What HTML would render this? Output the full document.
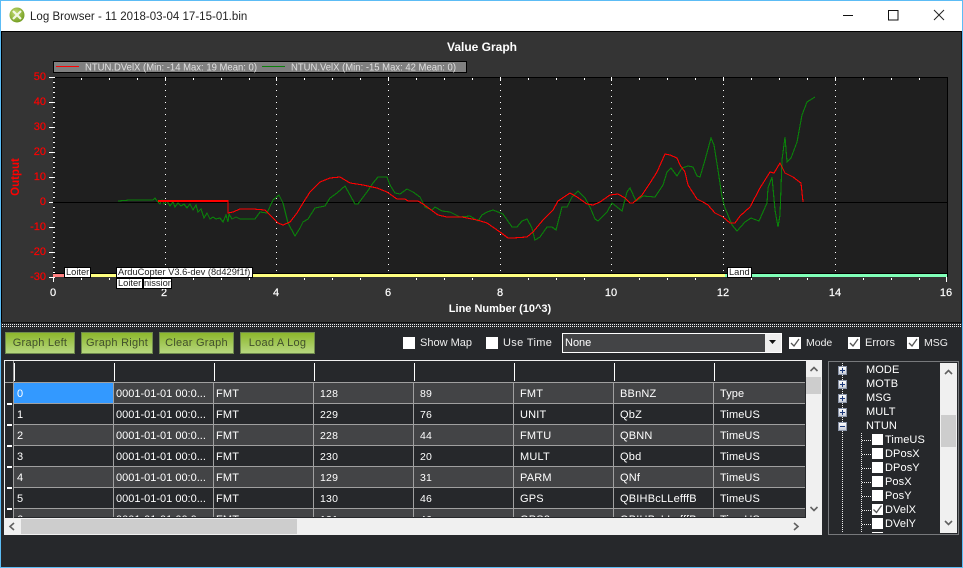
<!DOCTYPE html>
<html><head><meta charset="utf-8"><title>Log Browser</title>
<style>
html,body{margin:0;padding:0;width:963px;height:568px;overflow:hidden;background:#26282b}
*{box-sizing:border-box}
body{font-family:"Liberation Sans",sans-serif;position:relative}
.a{position:absolute}
.t{position:absolute;white-space:nowrap;color:#fff;font-size:11px;line-height:14px}
.btn{position:absolute;top:332px;height:22px;border:1px solid #6f8a4e;background:linear-gradient(#8db72c,#b6d77e);color:#41502c;font-size:11px;line-height:20px;text-align:center;letter-spacing:.25px;white-space:nowrap}
.cb{position:absolute;width:12px;height:12px;background:#fff}
.row{position:absolute;left:14px;width:791px;height:21px;border-bottom:1px solid #a0a0a0}
.row.o{background:#434446}
.row.e{background:#26282b}
.c{position:absolute;top:0;height:20px;border-right:1px solid #a0a0a0;color:#fff;font-size:11px;line-height:22px;padding-left:2px;white-space:nowrap;overflow:hidden;letter-spacing:.2px}
.c1{left:0;width:100px;padding-left:3px}.c2{left:100px;width:100px;letter-spacing:0}.c3{left:200px;width:100px}.c4{left:300px;width:100px;font-size:10.5px;padding-left:6px}.c5{left:400px;width:100px;font-size:10.5px;padding-left:6px}.c6{left:500px;width:100px;padding-left:6px}.c7{left:600px;width:100px;padding-left:6px}.c8{left:700px;width:91px;border:0;padding-left:6px;letter-spacing:.1px}
.hs{position:absolute;top:363px;width:1px;height:18px;background:#fff}
.dash{position:absolute;left:7px;width:5px;height:2px;background:#fff}
.tr{position:absolute;color:#fff;font-size:11px;line-height:16px;white-space:nowrap;letter-spacing:.1px}
.pm{position:absolute;left:838px;width:9px;height:9px;background:linear-gradient(#fff,#c8cdd8);border:1px solid #8a94a8}
.pm i{position:absolute;left:1px;top:3px;width:5px;height:1px;background:#1d3a7a}
.pm b{position:absolute;left:3px;top:1px;width:1px;height:5px;background:#1d3a7a}
.sub{position:absolute;left:872px;width:11px;height:11px;background:#fff}
.lb{position:absolute;background:#fff;border:1px solid #000;color:#222;font-size:9.3px;line-height:9px;white-space:nowrap;padding-left:1px;overflow:hidden}
</style></head>
<body>
<!-- window frame -->
<div class="a" style="left:0;top:0;width:963px;height:31px;background:#fff;border-top:1px solid #5cbcf5;border-left:1px solid #5cbcf5;border-right:1px solid #5cbcf5"></div>
<svg class="a" style="left:9px;top:7px" width="18" height="18" viewBox="0 0 18 18"><defs><radialGradient id="g" cx=".4" cy=".35" r=".7"><stop offset="0" stop-color="#c4dc72"/><stop offset="1" stop-color="#6f9a1e"/></radialGradient></defs><circle cx="8" cy="8" r="7.5" fill="url(#g)"/><path d="M4 4l8 8M12 4l-8 8" stroke="#f2f7e4" stroke-width="2.2"/></svg>
<div class="t" style="left:30px;top:9px;color:#222;font-size:11.5px;letter-spacing:.02px;line-height:16px">Log Browser - 11 2018-03-04 17-15-01.bin</div>
<svg class="a" style="left:830px;top:0" width="133" height="31"><path d="M13 15.5h10" stroke="#111" fill="none"/><rect x="58.500" y="10.500" width="9.500" height="9.500" fill="none" stroke="#111"/><path d="M104 10l10 10M114 10l-10 10" stroke="#222" fill="none"/></svg>

<!-- graph panel -->
<div class="a" style="left:1px;top:31px;width:961px;height:292px;background:#343434;border-top:1px solid #000;border-left:1px solid #000;border-right:1px solid #111"></div>
<div class="a" style="left:0;top:1px;width:1px;height:566px;background:#5cbcf5"></div>
<div class="a" style="left:962px;top:1px;width:1px;height:566px;background:#5cbcf5"></div>
<div class="a" style="left:0;top:567px;width:963px;height:1px;background:#5cbcf5"></div>
<div class="a" style="left:1px;top:322px;width:961px;height:1px;background:#111"></div>
<div class="a" style="left:2px;top:323px;width:959px;height:5px;background:#26282b"></div>
<svg class="a" style="left:2px;top:324px" width="959" height="3"><path d="M0 .5H959M0 2.500H959" stroke="#f0f0f0" stroke-dasharray="1 1" fill="none"/></svg>

<svg class="a" style="left:0;top:0;font-family:'Liberation Sans',sans-serif" width="963" height="325">
<text x="482" y="51" fill="#fff" font-size="12" font-weight="bold" text-anchor="middle">Value Graph</text>
<rect x="53" y="77" width="894" height="200" fill="#1f1f1f"/>
<path d="M53 77.500H947.500V277" fill="none" stroke="#000"/>
<!-- grid -->
<g stroke="#fff" fill="none">
<path d="M165.500 78V280M276.500 78V280M388.500 78V280M500.500 78V280M611.500 78V280M723.500 78V280M835.500 78V280" stroke-dasharray="1 5"/>
<path d="M165.500 77v4M276.500 77v4M388.500 77v4M500.500 77v4M611.500 77v4M723.500 77v4M835.500 77v4M946.500 277v5M53.500 277v5" />
<path d="M81.500 78v2M109.500 78v2M137.500 78v2M193.500 78v2M221.500 78v2M249.500 78v2M304.500 78v2M332.500 78v2M360.500 78v2M416.500 78v2M444.500 78v2M472.500 78v2M528.500 78v2M556.500 78v2M584.500 78v2M639.500 78v2M667.500 78v2M695.500 78v2M751.500 78v2M779.500 78v2M807.500 78v2M863.500 78v2M891.500 78v2M919.500 78v2"/>
<path d="M81.500 278v2M109.500 278v2M137.500 278v2M193.500 278v2M221.500 278v2M249.500 278v2M304.500 278v2M332.500 278v2M360.500 278v2M416.500 278v2M444.500 278v2M472.500 278v2M528.500 278v2M556.500 278v2M584.500 278v2M639.500 278v2M667.500 278v2M695.500 278v2M751.500 278v2M779.500 278v2M807.500 278v2M863.500 278v2M891.500 278v2M919.500 278v2"/>
<path d="M49 77.500h6M49 102.500h6M49 127.500h6M49 152.500h6M49 177.500h6M49 202.500h6M49 227.500h6M49 252.500h6M49 277.500h6"/>
<path d="M53 82.500h2M53 87.500h2M53 92.500h2M53 97.500h2M53 107.500h2M53 112.500h2M53 117.500h2M53 122.500h2M53 132.500h2M53 137.500h2M53 142.500h2M53 147.500h2M53 157.500h2M53 162.500h2M53 167.500h2M53 172.500h2M53 182.500h2M53 187.500h2M53 192.500h2M53 197.500h2M53 207.500h2M53 212.500h2M53 217.500h2M53 222.500h2M53 232.500h2M53 237.500h2M53 242.500h2M53 247.500h2M53 257.500h2M53 262.500h2M53 267.500h2M53 272.500h2"/>
</g>
<path d="M53 202.500H947" stroke="#000" fill="none"/>
<!-- green -->
<polyline shape-rendering="crispEdges" fill="none" stroke="#0a800a" stroke-width="1.100" points="118,201 130,200 153,200 155,198 157,201 160,204 162,200 164,204 167,201 170,206 173,202 175,207 178,203 181,206 184,204 187,208 190,204 193,210 196,205 198,212 201,209 204,218 207,213 210,219 213,217 216,219 220,218 223,222 226,215 228,222 229,214 232,219 236,217 240,219 255,219 260,212 267,213 273,200 279,195 283,203 288,223 295,236 300,228 303,222 308,219 315,208 325,206 330,198 337,193 345,186 350,195 355,204 358,204 367,192 373,183 378,177 387,177 390,185 395,193 400,194 407,189 413,192 420,197 425,207 432,210 435,207 442,211 450,212 460,217 470,216 478,221 482,215 487,212 493,210 503,214 512,227 517,227 522,221 527,219 532,228 535,240 540,237 547,227 552,227 556,230 562,207 567,207 572,197 578,191 585,198 590,207 595,219 598,221 607,212 612,203 622,211 627,192 630,188 636,201 643,196 655,197 663,185 667,172 671,168 677,176 682,168 688,166 693,167 697,176 700,177 705,160 711,138 714,145 718,170 722,197 725,208 732,225 737,231 745,222 751,218 759,221 767,203 768,188 772,177 775,210 778,227 780,215 782,160 785,137 787,162 791,158 797,142 802,115 807,102 815,97"/>
<!-- red -->
<polyline shape-rendering="crispEdges" fill="none" stroke="#ff0000" stroke-width="1.100" points="158,200.500 228,200.500 228,213 233,212 240,209 253,209 265,210 272,217 278,223 283,225 290,222 297,213 303,203 310,192 320,182 330,178 340,177 350,183 363,185 377,188 387,192 397,199 405,199 408,201 418,201 423,204 430,209 438,215 447,217 462,217 477,220 487,223 500,232 508,238 513,238 527,237 533,232 543,220 553,210 558,201 570,193 577,197 587,204 593,205 600,202 610,195 618,194 625,198 630,203 633,203 642,195 650,183 657,172 665,154 670,155 677,158 680,165 685,172 688,185 697,199 703,202 708,205 715,213 723,217 730,223 735,223 740,216 750,207 760,188 770,172 774,173 780,163 785,173 793,177 801,183 803,202"/>
<path d="M158 201.500H228" stroke="#ff0000" fill="none"/>
<!-- mode bars -->
<rect x="53" y="273" width="894" height="1" fill="#000"/>
<rect x="53" y="274" width="11" height="3" fill="#ff8080"/>
<rect x="64" y="274" width="661" height="3" fill="#ffff80"/>
<rect x="725" y="274" width="222" height="3" fill="#80ffb8"/>
<!-- legend -->
<rect x="53.500" y="61.500" width="413" height="11" fill="#808080" stroke="#000"/>
<path d="M56 66.500h23" stroke="#ff0000" fill="none"/><path d="M262 66.500h23" stroke="#0a800a" fill="none"/>
<text x="85" y="70.500" fill="#e0e0e0" font-size="10.500" textLength="172" lengthAdjust="spacingAndGlyphs">NTUN.DVelX (Min: -14 Max: 19 Mean: 0)</text>
<text x="291" y="70.500" fill="#e0e0e0" font-size="10.500" textLength="165" lengthAdjust="spacingAndGlyphs">NTUN.VelX (Min: -15 Max: 42 Mean: 0)</text>
<!-- y axis -->
<g fill="#ff0000" font-size="11" text-anchor="end" stroke="#ff0000" stroke-width=".2">
<text x="46" y="80">50</text><text x="46" y="105">40</text><text x="46" y="130">30</text><text x="46" y="155">20</text><text x="46" y="180">10</text><text x="46" y="205">0</text><text x="46" y="230">-10</text><text x="46" y="255">-20</text><text x="46" y="280">-30</text>
</g>
<text transform="translate(19 177) rotate(-90)" fill="#ff0000" font-size="11.500" font-weight="bold" text-anchor="middle">Output</text>
<g fill="#fff" font-size="11" stroke="#fff" stroke-width=".2" text-anchor="middle">
<text x="53" y="296">0</text><text x="164" y="296">2</text><text x="276" y="296">4</text><text x="388" y="296">6</text><text x="500" y="296">8</text><text x="611" y="296">10</text><text x="723" y="296">12</text><text x="835" y="296">14</text><text x="946" y="296">16</text>
</g>
<text x="500" y="312" fill="#fff" font-size="11" font-weight="bold" text-anchor="middle">Line Number (10^3)</text>
</svg>
<div class="lb" style="left:64px;top:267px;width:27px;height:11px">Loiter</div>
<div class="lb" style="left:116px;top:267px;width:137px;height:11px">ArduCopter V3.6-dev (8d429f1f)</div>
<div class="lb" style="left:143px;top:278px;width:29px;height:11px;padding-left:0;text-align:right;padding-right:1px">nission</div>
<div class="lb" style="left:116px;top:278px;width:27px;height:11px">Loiter</div>
<div class="lb" style="left:727px;top:267px;width:25px;height:11px">Land</div>

<!-- toolbar -->
<div class="btn" style="left:5px;width:70px">Graph Left</div>
<div class="btn" style="left:81px;width:72px">Graph Right</div>
<div class="btn" style="left:159px;width:75px">Clear Graph</div>
<div class="btn" style="left:240px;width:75px">Load A Log</div>

<div class="cb" style="left:403px;top:337px"></div>
<div class="t" style="left:420px;top:336px;color:#eee">Show Map</div>
<div class="cb" style="left:486px;top:337px"></div>
<div class="t" style="left:503px;top:336px;color:#eee;letter-spacing:.35px">Use Time</div>
<div class="a" style="left:562px;top:333px;width:220px;height:20px;border:1px solid #fff;background:#434446"></div>
<div class="a" style="left:765px;top:334px;width:16px;height:18px;background:#eee"></div>
<svg class="a" style="left:769px;top:340px" width="8" height="5"><path d="M0 0h7L3.500 4z" fill="#111"/></svg>
<div class="t" style="left:565px;top:336px">None</div>

<div class="cb" style="left:789px;top:337px"></div>
<div class="t" style="left:806px;top:336px;color:#eee;font-size:10.5px">Mode</div>
<div class="cb" style="left:848px;top:337px"></div>
<div class="t" style="left:865px;top:336px;color:#eee">Errors</div>
<div class="cb" style="left:907px;top:337px"></div>
<div class="t" style="left:924px;top:336px;color:#eee;font-size:10.5px">MSG</div>
<svg class="a" style="left:789px;top:337px" width="130" height="12"><g fill="none" stroke="#555" stroke-width="1.300"><path d="M2 6l3 3 5-7"/><path d="M61 6l3 3 5-7"/><path d="M120 6l3 3 5-7"/></g></svg>

<!-- data grid -->
<div class="a" style="left:4px;top:360px;width:802px;height:158px;overflow:hidden;background:#26282b;border-top:1px solid #f0f0f0;border-left:1px solid #f0f0f0"></div>
<div class="a" style="left:13px;top:361px;width:1px;height:157px;background:#a0a0a0"></div>
<div class="hs" style="left:14px"></div><div class="hs" style="left:114px"></div><div class="hs" style="left:214px"></div><div class="hs" style="left:314px"></div><div class="hs" style="left:414px"></div><div class="hs" style="left:514px"></div><div class="hs" style="left:614px"></div><div class="hs" style="left:714px"></div>
<div class="a" style="left:5px;top:382px;width:800px;height:1px;background:#a0a0a0"></div>
<div class="a" style="left:0;top:0;width:805px;height:517px;overflow:hidden;pointer-events:none">
<div class="row o" style="top:383px"><div class="c c1" style="background:#3399ff">0</div><div class="c c2">0001-01-01 00:0...</div><div class="c c3">FMT</div><div class="c c4">128</div><div class="c c5">89</div><div class="c c6">FMT</div><div class="c c7">BBnNZ</div><div class="c c8">Type</div></div>
<div class="row e" style="top:404px"><div class="c c1">1</div><div class="c c2">0001-01-01 00:0...</div><div class="c c3">FMT</div><div class="c c4">229</div><div class="c c5">76</div><div class="c c6">UNIT</div><div class="c c7">QbZ</div><div class="c c8">TimeUS</div></div>
<div class="row o" style="top:425px"><div class="c c1">2</div><div class="c c2">0001-01-01 00:0...</div><div class="c c3">FMT</div><div class="c c4">228</div><div class="c c5">44</div><div class="c c6">FMTU</div><div class="c c7">QBNN</div><div class="c c8">TimeUS</div></div>
<div class="row e" style="top:446px"><div class="c c1">3</div><div class="c c2">0001-01-01 00:0...</div><div class="c c3">FMT</div><div class="c c4">230</div><div class="c c5">20</div><div class="c c6">MULT</div><div class="c c7">Qbd</div><div class="c c8">TimeUS</div></div>
<div class="row o" style="top:467px"><div class="c c1">4</div><div class="c c2">0001-01-01 00:0...</div><div class="c c3">FMT</div><div class="c c4">129</div><div class="c c5">31</div><div class="c c6">PARM</div><div class="c c7">QNf</div><div class="c c8">TimeUS</div></div>
<div class="row e" style="top:488px"><div class="c c1">5</div><div class="c c2">0001-01-01 00:0...</div><div class="c c3">FMT</div><div class="c c4">130</div><div class="c c5">46</div><div class="c c6">GPS</div><div class="c c7">QBIHBcLLefffB</div><div class="c c8">TimeUS</div></div>
<div class="row o" style="top:509px"><div class="c c1">6</div><div class="c c2">0001-01-01 00:0...</div><div class="c c3">FMT</div><div class="c c4">131</div><div class="c c5">46</div><div class="c c6">GPS2</div><div class="c c7">QBIHBcLLefffB</div><div class="c c8">TimeUS</div></div>
</div>
<div class="dash" style="top:403px"></div><div class="dash" style="top:424px"></div><div class="dash" style="top:445px"></div><div class="dash" style="top:466px"></div><div class="dash" style="top:487px"></div><div class="dash" style="top:508px"></div>

<!-- grid scrollbars -->
<div class="a" style="left:4px;top:518px;width:818px;height:17px;background:#f0f0f0"></div>
<div class="a" style="left:21px;top:519px;width:276px;height:15px;background:#cdcdcd"></div>
<div class="a" style="left:806px;top:360px;width:16px;height:158px;background:#f0f0f0"></div>
<div class="a" style="left:806px;top:377px;width:15px;height:17px;background:#cdcdcd"></div>
<svg class="a" style="left:806px;top:360px" width="16" height="175"><g fill="none" stroke="#606060" stroke-width="1.600"><path d="M4.500 11l3.500-3.500 3.500 3.500"/><path d="M4.500 147l3.500 3.500 3.500-3.500"/></g></svg>
<svg class="a" style="left:4px;top:518px" width="806" height="17"><g fill="none" stroke="#606060" stroke-width="1.600"><path d="M10 5l-4 3.500 4 3.500"/><path d="M790 5l4 3.500-4 3.500"/></g></svg>

<!-- tree -->
<div class="a" style="left:828px;top:361px;width:131px;height:174px;border:1px solid #77797c;background:#26282b"></div>
<div class="a" style="left:940px;top:363px;width:17px;height:170px;background:#f0f0f0"></div>
<div class="a" style="left:941px;top:415px;width:15px;height:32px;background:#cdcdcd"></div>
<svg class="a" style="left:940px;top:363px" width="17" height="170"><g fill="none" stroke="#606060" stroke-width="1.600"><path d="M5 11l3.500-3.500L12 11"/><path d="M5 158l3.500 3.500L12 158"/></g></svg>
<svg class="a" style="left:829px;top:362px" width="111" height="172"><g stroke="#eee" fill="none" stroke-dasharray="1 1"><path d="M13.500 1V170"/><path d="M32.500 71V170"/><path d="M33 78.500h10M33 92.500h10M33 106.500h10M33 120.500h10M33 134.500h10M33 148.500h10M33 162.500h10"/></g></svg>
<div class="pm" style="top:366px"><i></i><b></b></div>
<div class="pm" style="top:380px"><i></i><b></b></div>
<div class="pm" style="top:394px"><i></i><b></b></div>
<div class="pm" style="top:408px"><i></i><b></b></div>
<div class="pm" style="top:422px"><i></i></div>
<div class="tr" style="left:866px;top:362px">MODE</div>
<div class="tr" style="left:866px;top:376px">MOTB</div>
<div class="tr" style="left:866px;top:390px">MSG</div>
<div class="tr" style="left:866px;top:404px">MULT</div>
<div class="tr" style="left:866px;top:418px">NTUN</div>
<div class="sub" style="top:434px"></div><div class="tr" style="left:885px;top:432px">TimeUS</div>
<div class="sub" style="top:448px"></div><div class="tr" style="left:885px;top:446px">DPosX</div>
<div class="sub" style="top:462px"></div><div class="tr" style="left:885px;top:460px">DPosY</div>
<div class="sub" style="top:476px"></div><div class="tr" style="left:885px;top:474px">PosX</div>
<div class="sub" style="top:490px"></div><div class="tr" style="left:885px;top:488px">PosY</div>
<div class="sub" style="top:504px"></div><div class="tr" style="left:885px;top:502px">DVelX</div>
<svg class="a" style="left:872px;top:504px" width="11" height="11"><path d="M1.500 5.500l3 3 5-7" fill="none" stroke="#555" stroke-width="1.300"/></svg>
<div class="sub" style="top:518px"></div><div class="tr" style="left:885px;top:516px">DVelY</div>
<div class="sub" style="top:532px;height:1px"></div>
</body></html>
